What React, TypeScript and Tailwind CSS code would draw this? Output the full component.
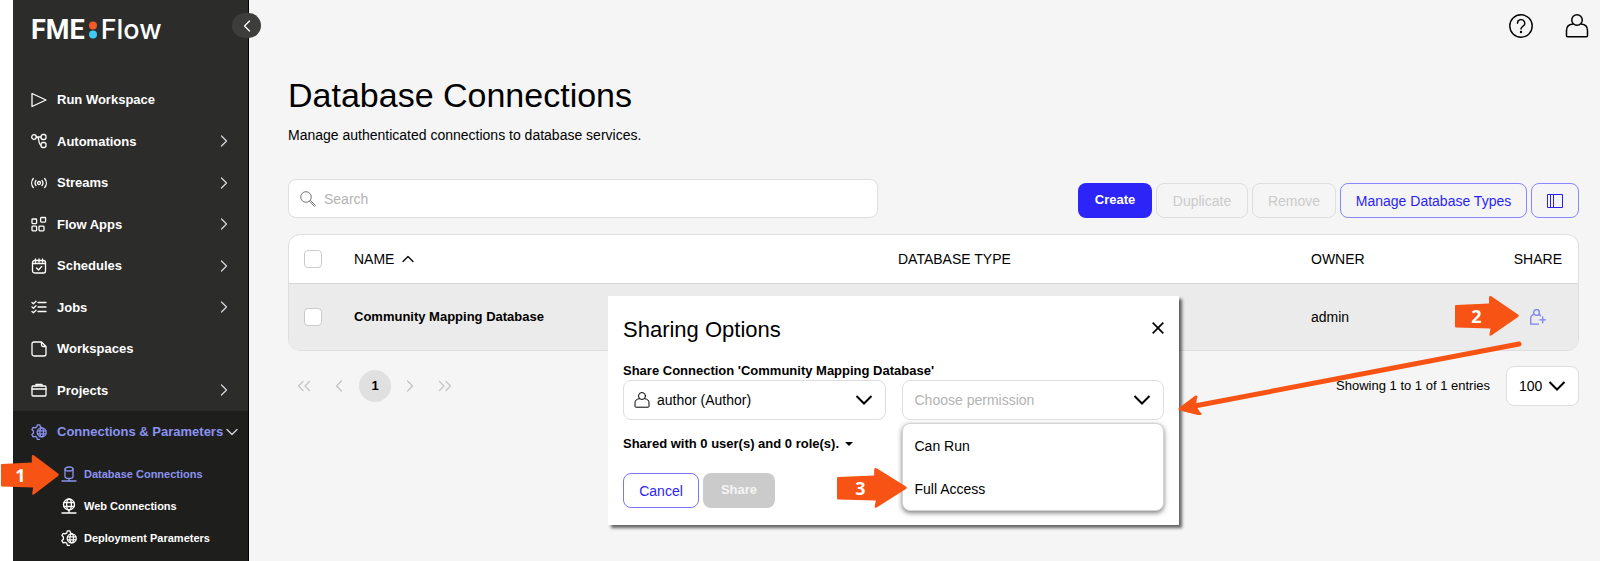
import { useState } from "react";
import type { ReactNode } from "react";

type IconProps = { className?: string; children?: ReactNode };

const Icon = ({ className = "size-4 shrink-0", children }: IconProps) => (
  <svg
    className={className}
    viewBox="0 0 16 16"
    fill="none"
    stroke="currentColor"
    strokeWidth="1.3"
    strokeLinecap="round"
    strokeLinejoin="round"
    aria-hidden="true"
  >
    {children}
  </svg>
);

const PlayIcon = () => (
  <Icon>
    <path d="M1 1.5v13L15 8z" />
  </Icon>
);

const AutomationsIcon = () => (
  <Icon>
    <circle cx="3" cy="4" r="2.3" />
    <rect x="10" y="1.5" width="5" height="5" rx="2" />
    <rect x="10" y="9.5" width="5" height="5" rx="2" />
    <path d="M5.3 4H10M6.3 4c2.2 0 .7 8 3.7 8" />
  </Icon>
);

const StreamsIcon = () => (
  <Icon>
    <circle cx="8" cy="8" r="1.5" />
    <path d="M5 5.5a4 4 0 0 0 0 5M11 5.5a4 4 0 0 1 0 5M2.3 3.5a7 7 0 0 0 0 9M13.7 3.5a7 7 0 0 1 0 9" />
  </Icon>
);

const AppsIcon = () => (
  <Icon>
    <rect x="1" y="3" width="4.6" height="4.6" rx="0.8" />
    <rect x="9.6" y="1.5" width="5" height="4.6" rx="0.8" />
    <rect x="1" y="10.2" width="4.6" height="4.6" rx="0.8" />
    <rect x="8" y="10.2" width="5" height="4.6" rx="0.8" />
  </Icon>
);

const CalendarIcon = () => (
  <Icon>
    <rect x="1.5" y="2.5" width="13" height="12.5" rx="2" />
    <path d="M1.5 5.5h13M4.5 1v3M8 1v3M11.5 1v3M5.5 10l2 2 3.2-3.5" />
  </Icon>
);

const JobsIcon = () => (
  <Icon>
    <path d="M7 3.5h8M7 8h8M7 12.5h8M1 3.5l1.4 1.3L5 2.3M1 8l1.4 1.3L5 6.8M1 12.5l1.4 1.3L5 11.3" />
  </Icon>
);

const FileIcon = () => (
  <Icon>
    <path d="M3 1h7.5L15 5.5V13a2 2 0 0 1-2 2H3a2 2 0 0 1-2-2V3a2 2 0 0 1 2-2zM10.5 1v3a1.5 1.5 0 0 0 1.5 1.5h3" />
  </Icon>
);

const BriefcaseIcon = () => (
  <Icon>
    <rect x="1" y="4" width="14" height="10" rx="1" />
    <path d="M1 7h14M5 4V2.5h6V4" />
  </Icon>
);

const GearGlobeIcon = () => (
  <Icon>
    <path d="M8.5 15.3H6.3l-.5-2-1.6-1-2 .6-1.3-2.3 1.5-1.4V7L.9 5.6l1.3-2.3 2 .6 1.6-1 .5-2h2.6l.5 2 1.2.7" />
    <circle cx="10.7" cy="8.3" r="4.5" />
    <ellipse cx="10.7" cy="8.3" rx="1.8" ry="4.5" />
    <path d="M6.5 6.8h8.4M6.5 9.8h8.4" />
  </Icon>
);

const DatabaseIcon = () => (
  <Icon>
    <ellipse cx="8" cy="3" rx="4" ry="2" />
    <path d="M4 3v7.5c0 1.1 1.8 2 4 2s4-.9 4-2V3M8 12.5V15M1 15h14" />
  </Icon>
);

const WebIcon = () => (
  <Icon>
    <circle cx="8" cy="6.5" r="5.5" />
    <ellipse cx="8" cy="6.5" rx="2.4" ry="5.5" />
    <path d="M3 4.5h10M3 8.5h10M8 12v3M1 15h14" />
  </Icon>
);

const UserIcon = ({ className }: IconProps) => (
  <Icon className={className}>
    <circle cx="8" cy="4" r="3.5" />
    <path d="M5.3 6.7C2.5 6.9 1 8.5 1 11v3.5c0 .4.3.7.7.7h12.6c.4 0 .7-.3.7-.7V11c0-2.5-1.5-4.1-4.3-4.3" />
  </Icon>
);

const Chevron = ({ className }: IconProps) => (
  <Icon className={className}>
    <path d="M5.5 3l5 5-5 5" />
  </Icon>
);

const DownIcon = () => (
  <svg
    className="absolute right-3 pointer-events-none size-5"
    viewBox="0 0 20 20"
    fill="none"
    stroke="black"
    strokeWidth="2"
    aria-hidden="true"
  >
    <path d="M2.5 6l7.5 7.5L17.5 6" />
  </svg>
);

const MENU = [
  { label: "Run Workspace", icon: <PlayIcon />, expandable: false },
  { label: "Automations", icon: <AutomationsIcon />, expandable: true },
  { label: "Streams", icon: <StreamsIcon />, expandable: true },
  { label: "Flow Apps", icon: <AppsIcon />, expandable: true },
  { label: "Schedules", icon: <CalendarIcon />, expandable: true },
  { label: "Jobs", icon: <JobsIcon />, expandable: true },
  { label: "Workspaces", icon: <FileIcon />, expandable: false },
  { label: "Projects", icon: <BriefcaseIcon />, expandable: true },
];

const SUBMENU = [
  { label: "Database Connections", icon: <DatabaseIcon />, active: true },
  { label: "Web Connections", icon: <WebIcon />, active: false },
  { label: "Deployment Parameters", icon: <GearGlobeIcon />, active: false },
];

const Marker = ({ className, label }: { className: string; label: string }) => (
  <div className={`absolute z-30 h-10 flex items-center ${className}`}>
    <svg
      className="absolute inset-0 size-full"
      viewBox="0 0 64 40"
      preserveAspectRatio="none"
      fill="#f75314"
      aria-hidden="true"
    >
      <path d="M1 9l33-1.5V2c0-2 1.5-2.5 3-1.2L63 18.5c1 .8 1 1.6 0 2.4L37 39c-1.5 1.3-3 1-2.5-1l1-5.5L1 31.5q-1 0-1-1V10q0-1 1-1z" />
    </svg>
    <span className="relative w-2/3 text-center text-white text-lg font-bold font-['Noto_Sans',sans-serif]">
      {label}
    </span>
  </div>
);

const Sidebar = () => (
  <aside className="relative bg-[#2c2c2a] border-black border-r flex flex-col shrink-0 text-white w-[236px]">
    <div className="flex h-[79px] items-start pl-[18px] pt-3">
      <a href="#home" className="flex items-center leading-9 text-[27px]">
        <span className="font-bold font-['Roboto',sans-serif]">FME</span>
        <svg className="mx-1 h-5 w-2" viewBox="0 0 8 20" aria-hidden="true">
          <circle cx="4" cy="5.5" r="4" fill="#f15a29" />
          <circle cx="4" cy="14.5" r="4" fill="#3fc8f4" />
        </svg>
        <span className="font-medium font-['Inter',sans-serif]">Flow</span>
      </a>
    </div>
    <button
      type="button"
      aria-label="Collapse menu"
      className="absolute -right-[13px] top-[13px] z-10 bg-[#3d3d3b] flex h-[25px] items-center justify-center rounded-full w-[29px]"
    >
      <Chevron className="rotate-180 size-4" />
    </button>
    <nav className="flex flex-col grow">
      <ul className="grid grid-rows-8 h-[332px]">
        {MENU.map((item) => (
          <li key={item.label} className="flex">
            <a
              href="#menu"
              className="flex font-bold grow items-center pl-[18px] pr-4 text-[13px]"
            >
              {item.icon}
              <span className="grow pl-[10px]">{item.label}</span>
              {item.expandable && <Chevron className="size-4 text-gray-300" />}
            </a>
          </li>
        ))}
      </ul>
      <div className="bg-[#1e1e1c] grow">
        <a
          href="#connections"
          className="flex font-bold h-[42px] items-center pl-[18px] pr-2 text-[#8a93f0] text-[13px]"
        >
          <GearGlobeIcon />
          <span className="grow pl-[10px] whitespace-nowrap">
            Connections & Parameters
          </span>
          <Chevron className="rotate-90 shrink-0 size-4 text-gray-300" />
        </a>
        <ul className="pt-[5px]">
          {SUBMENU.map((item) => (
            <li key={item.label}>
              <a
                href="#submenu"
                className={`flex font-bold gap-[7px] h-8 items-center pl-12 text-[11px] ${
                  item.active ? "text-[#8a93f0]" : "text-white"
                }`}
              >
                {item.icon}
                {item.label}
              </a>
            </li>
          ))}
        </ul>
      </div>
    </nav>
  </aside>
);

const checkboxClass =
  "appearance-none bg-white block border border-[#cbcbcb] rounded size-[18px]";

const ConnectionsTable = () => (
  <div className="bg-white border border-[#dedede] mt-4 overflow-hidden rounded-xl">
    <table className="table-fixed text-[13px] text-left w-full">
      <colgroup>
        <col className="w-[65px]" />
        <col className="w-[544px]" />
        <col />
        <col className="w-[159px]" />
        <col className="w-[108px]" />
      </colgroup>
      <thead>
        <tr className="h-12">
          <th className="pl-[15px]">
            <input type="checkbox" aria-label="Select all" className={checkboxClass} />
          </th>
          <th className="font-normal text-sm">
            <button type="button" className="flex gap-[6px] items-center">
              NAME
              <Chevron className="-rotate-90 size-4" />
            </button>
          </th>
          <th className="font-normal text-sm">DATABASE TYPE</th>
          <th className="font-normal text-sm">OWNER</th>
          <th className="font-normal pr-4 text-right text-sm">SHARE</th>
        </tr>
      </thead>
      <tbody>
        <tr className="bg-[#ebebeb] border-[#d6d6d6] border-t h-[67px]">
          <td className="pl-[15px]">
            <input
              type="checkbox"
              aria-label="Select Community Mapping Database"
              className={checkboxClass}
            />
          </td>
          <td className="font-bold">Community Mapping Database</td>
          <td />
          <td className="text-sm">admin</td>
          <td className="pr-8">
            <button
              type="button"
              aria-label="Share connection"
              className="block ml-auto text-[#7b82e8]"
            >
              <Icon className="size-4">
                <circle cx="6.5" cy="3.5" r="2.9" />
                <path d="M4 5.4C1.7 6 .7 7.6.7 9.8v5.4h7.8M9 5.6c.8.3 1.2.6 1.6 1.2M12.7 7.8v6M9.7 10.8h6" />
              </Icon>
            </button>
          </td>
        </tr>
      </tbody>
    </table>
  </div>
);

const Pagination = () => (
  <div className="flex items-center justify-between mt-[15px]">
    <div className="flex items-center pl-2 text-[#c4c4c4]">
      <button type="button" aria-label="First page" className="mr-[19px]">
        <Icon className="size-4">
          <path d="M7 3.5L2.5 8 7 12.5M13.5 3.5L9 8l4.5 4.5" />
        </Icon>
      </button>
      <button type="button" aria-label="Previous page" className="mr-3">
        <Chevron className="rotate-180 size-4" />
      </button>
      <button
        type="button"
        className="bg-[#e0e0e0] font-bold rounded-full size-8 text-[13px] text-black"
      >
        1
      </button>
      <button type="button" aria-label="Next page" className="ml-[11px]">
        <Chevron className="size-4" />
      </button>
      <button type="button" aria-label="Last page" className="ml-[19px]">
        <Icon className="size-4">
          <path d="M2.5 3.5L7 8l-4.5 4.5M9 3.5L13.5 8 9 12.5" />
        </Icon>
      </button>
    </div>
    <div className="flex gap-4 items-center text-sm">
      <label htmlFor="pageSize" className="text-[13px]">
        Showing 1 to 1 of 1 entries
      </label>
      <div className="flex items-center relative">
        <select
          id="pageSize"
          className="appearance-none bg-white border border-[#dedede] h-10 pl-3 rounded-lg w-[73px]"
        >
          <option>100</option>
        </select>
        <DownIcon />
      </div>
    </div>
  </div>
);

const SharingDialog = () => (
  <div
    role="dialog"
    aria-labelledby="sharing-title"
    className="absolute left-[608px] top-[296px] z-20 bg-white h-[229px] px-[15px] shadow-[3px_3px_3px_rgba(0,0,0,0.6)] w-[571px]"
  >
    <div className="flex items-center justify-between pt-[18px]">
      <h2 id="sharing-title" className="leading-8 text-[22px]">
        Sharing Options
      </h2>
      <button type="button" aria-label="Close" className="pb-1">
        <svg className="size-3" viewBox="0 0 12 12" stroke="black" strokeWidth="1.7">
          <path d="M.7.7l10.6 10.6M11.3.7L.7 11.3" />
        </svg>
      </button>
    </div>
    <p className="font-bold leading-[19px] mt-[15px] text-[13px]">
      Share Connection 'Community Mapping Database'
    </p>
    <div className="grid grid-cols-2 gap-4 text-sm">
      <div className="flex items-center relative">
        <UserIcon className="absolute left-[11px] size-4 stroke-1" />
        <select
          aria-label="User or role"
          className="appearance-none border border-[#dedede] h-10 pl-[33px] rounded-lg w-full"
        >
          <option>author (Author)</option>
        </select>
        <DownIcon />
      </div>
      <div className="flex items-center relative">
        <select
          aria-label="Permission"
          className="appearance-none border border-[#dedede] h-10 pl-3 rounded-lg text-[#b3b3b3] w-full"
        >
          <option>Choose permission</option>
        </select>
        <DownIcon />
        <div
          role="listbox"
          aria-label="Permissions"
          className="absolute inset-x-0 top-[43px] bg-white border border-[#d4d4d4] flex flex-col rounded-lg shadow-[0_2px_5px_rgba(0,0,0,0.5)]"
        >
          <button type="button" role="option" className="h-[43px] px-3 text-left">
            Can Run
          </button>
          <button type="button" role="option" className="h-[43px] px-3 text-left">
            Full Access
          </button>
        </div>
      </div>
    </div>
    <button
      type="button"
      className="flex font-bold gap-[6px] items-center leading-5 mt-[14px] text-[13px]"
    >
      Shared with 0 user(s) and 0 role(s).
      <svg className="h-1 w-2" viewBox="0 0 8 4" aria-hidden="true">
        <path d="M0 0h8L4 4z" />
      </svg>
    </button>
    <div className="flex gap-1 mt-[19px] text-sm">
      <button
        type="button"
        className="border border-[#7a75ff] h-[35px] rounded-lg text-[#2a1ff5] w-[76px]"
      >
        Cancel
      </button>
      <button
        type="button"
        disabled
        className="bg-[#cbcbcb] font-bold h-[35px] rounded-lg text-[13px] text-[#f5f5f5] w-[72px]"
      >
        Share
      </button>
    </div>
  </div>
);

const App = () => {
  const [search, setSearch] = useState("");

  return (
    <div className="relative flex min-h-screen overflow-hidden bg-white pl-[13px] text-black font-['Liberation_Sans',Arial,sans-serif]">
      <Sidebar />
      <main className="bg-[#f5f5f5] grow min-w-0 pl-[39px] pr-[21px]">
        <header className="-mr-[10px] flex gap-8 h-[52px] items-center justify-end">
          <button type="button" aria-label="Help">
            <svg
              className="size-6"
              viewBox="0 0 24 24"
              fill="none"
              stroke="black"
              strokeWidth="1.4"
              strokeLinecap="round"
            >
              <circle cx="12" cy="12" r="11.2" />
              <path d="M8.5 9.3a3.6 3.6 0 1 1 5.3 3.1c-1.2.7-1.8 1.4-1.8 2.6" />
              <circle cx="12" cy="18" r="0.5" fill="black" />
            </svg>
          </button>
          <button type="button" aria-label="Account">
            <UserIcon className="size-6 stroke-1" />
          </button>
        </header>
        <h1 className="leading-10 mt-[23px] text-[34px]">Database Connections</h1>
        <p className="leading-5 mt-[10px] text-sm">
          Manage authenticated connections to database services.
        </p>
        <div className="flex items-end justify-between mt-[34px]">
          <div className="flex items-center relative w-[590px]">
            <svg
              className="absolute left-3 size-4"
              viewBox="0 0 16 16"
              fill="none"
              stroke="#777777"
              aria-hidden="true"
            >
              <circle cx="6" cy="6" r="5.3" />
              <path d="M9.6 10.4l.9-.9 5 5-1 1z" />
            </svg>
            <input
              type="text"
              aria-label="Search"
              placeholder="Search"
              value={search}
              onChange={(e) => setSearch(e.target.value)}
              className="bg-white border border-[#dedede] h-[39px] pl-[35px] placeholder:text-[#b3b3b3] rounded-lg text-sm w-full"
            />
          </div>
          <div className="flex gap-1 text-sm">
            <button
              type="button"
              className="bg-[#2d25f8] font-bold h-[35px] rounded-lg text-[13px] text-white w-[74px]"
            >
              Create
            </button>
            <button
              type="button"
              disabled
              className="border border-[#dedede] h-[35px] rounded-lg text-[#cbcbcb] w-[92px]"
            >
              Duplicate
            </button>
            <button
              type="button"
              disabled
              className="border border-[#dedede] h-[35px] rounded-lg text-[#cbcbcb] w-[84px]"
            >
              Remove
            </button>
            <button
              type="button"
              className="border border-[#8a86ff] h-[35px] rounded-lg text-[#2a1ff5] w-[187px]"
            >
              Manage Database Types
            </button>
            <button
              type="button"
              aria-label="Choose columns"
              className="border border-[#8a86ff] flex h-[35px] items-center justify-center rounded-lg text-[#2a1ff5] w-12"
            >
              <svg className="size-4" viewBox="0 0 16 16" fill="none" stroke="currentColor">
                <path d="M.5 1.5h15v13H.5zM3.5 1.5v13M6.5 1.5v13" />
              </svg>
            </button>
          </div>
        </div>
        <ConnectionsTable />
        <Pagination />
      </main>
      <SharingDialog />
      <Marker className="left-[1px] top-[455px] w-[58px]" label="1" />
      <Marker className="left-[1455px] top-[296px] w-16" label="2" />
      <Marker className="left-[837px] top-[468px] w-[70px]" label="3" />
      <svg
        className="absolute left-[1170px] top-[335px] z-30 h-20 w-[360px]"
        viewBox="0 0 360 80"
        fill="none"
        stroke="#f75314"
        strokeLinecap="round"
        strokeLinejoin="round"
        aria-hidden="true"
      >
        <path d="M349 9L14 73" strokeWidth="5" />
        <path d="M26 62L10 74l20 5" strokeWidth="3" />
        <path d="M26 62L10 74l20 5-5-8z" fill="#f75314" strokeWidth="2" />
      </svg>
    </div>
  );
};

export default App;
